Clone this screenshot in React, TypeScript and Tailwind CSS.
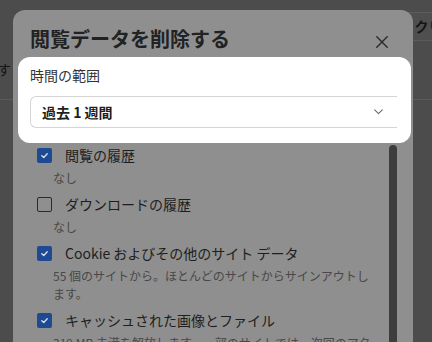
import React from 'react';

type Item = {
  label: string;
  sub: string;
  checked: boolean;
};

const items: Item[] = [
  { label: '閲覧の履歴', sub: 'なし', checked: true },
  { label: 'ダウンロードの履歴', sub: 'なし', checked: false },
  {
    label: 'Cookie およびその他のサイト データ',
    sub: '55 個のサイトから。ほとんどのサイトからサインアウトします。',
    checked: true,
  },
  {
    label: 'キャッシュされた画像とファイル',
    sub: '319 MB 未満を解放します。一部のサイトでは、次回のアクセス時に読み込みに時間がかかる可能性があります。',
    checked: true,
  },
];

function CheckBox({ checked }: { checked: boolean }) {
  if (!checked) {
    return <div className="w-[15px] h-[15px] flex-none rounded-[2px] border-[1.5px] border-[#2a2a2a]" />;
  }
  return (
    <div className="w-[15px] h-[15px] flex-none rounded-[2px] bg-[#1d4a93] flex items-center justify-center">
      <svg width="9" height="9" viewBox="0 0 10 10" fill="none">
        <path d="M2 5.2 L4.2 7.2 L8 3" stroke="#d7deea" strokeWidth="1.5" strokeLinecap="round" strokeLinejoin="round" />
      </svg>
    </div>
  );
}

function App() {
  return (
    <div
      className="relative w-[432px] h-[342px] overflow-hidden bg-[#4c4c4c]"
      style={{ fontFamily: '"Noto Sans CJK JP", "Noto Sans", sans-serif' }}
    >
      {/* page behind the dialog */}
      <div className="flex flex-col">
        <div className="h-[42px] flex items-start pt-[12px]">
          <div className="ml-[361px] flex-none h-[29px] px-[12px] flex items-center whitespace-nowrap rounded-[4px] border border-[#5c5c5c] bg-[#4f4f4f] text-[14px] font-bold text-[#161616]">
            すべてクリア
          </div>
        </div>
        <div className="h-[58px] border-b border-[#5a5a5a] flex items-start pt-[17px]">
          <div className="w-[11px] flex-none flex justify-end whitespace-nowrap text-[14px] leading-[20px] text-[#151515]">
            できます
          </div>
        </div>
      </div>

      {/* dialog */}
      <div className="absolute left-[13px] top-[10px] w-[400px] h-[360px] rounded-[12px] bg-[#8f8f8f] flex flex-col">
        <div className="flex items-start justify-between pl-[17px] pr-[25px] pt-[15px]">
          <h1 className="text-[20px] leading-[28px] font-bold text-[#222222]">閲覧データを削除する</h1>
          <svg className="mt-[11px]" width="12" height="12" viewBox="0 0 12 12" fill="none">
            <path d="M0.8 0.8 L11.2 11.2 M11.2 0.8 L0.8 11.2" stroke="#2a2a2a" strokeWidth="1.4" strokeLinecap="round" />
          </svg>
        </div>

        <div className="mt-[4px] ml-[5px] mr-[2px] h-[87px] rounded-[12px] bg-white pl-[12px] pt-[8px]">
          <div className="text-[14px] leading-[20px] text-[#333333]">時間の範囲</div>
          <div className="mt-[11px] w-[367px] h-[32px] rounded-l-[6px] border border-r-0 border-[#d5d5d5] flex items-center justify-between pl-[11px] pr-[14px]">
            <span className="text-[14px] font-bold text-[#1f1f1f]">過去 1 週間</span>
            <svg width="9" height="6" viewBox="0 0 9 6" fill="none">
              <path d="M0.7 0.8 L4.5 4.6 L8.3 0.8" stroke="#6a6a6a" strokeWidth="1.1" strokeLinecap="round" strokeLinejoin="round" />
            </svg>
          </div>
        </div>

        <div className="mt-[2px] flex flex-1">
          <div className="flex-1 pl-[24px] pr-[11px] flex flex-col gap-[7px]">
            {items.map((it) => (
              <div key={it.label} className="flex flex-col">
                <div className="h-[20px] flex items-center gap-[13px]">
                  <CheckBox checked={it.checked} />
                  <span className="text-[14px] leading-[20px] text-[#1e1e1e] whitespace-nowrap">{it.label}</span>
                </div>
                <div className="mt-[4px] ml-[16px] text-[12px] leading-[18px] text-[#484848]">{it.sub}</div>
              </div>
            ))}
          </div>
          <div className="w-[8px] mr-[16px] rounded-t-full bg-[#3d3d3d]" />
        </div>
      </div>
    </div>
  );
}

export default App;
